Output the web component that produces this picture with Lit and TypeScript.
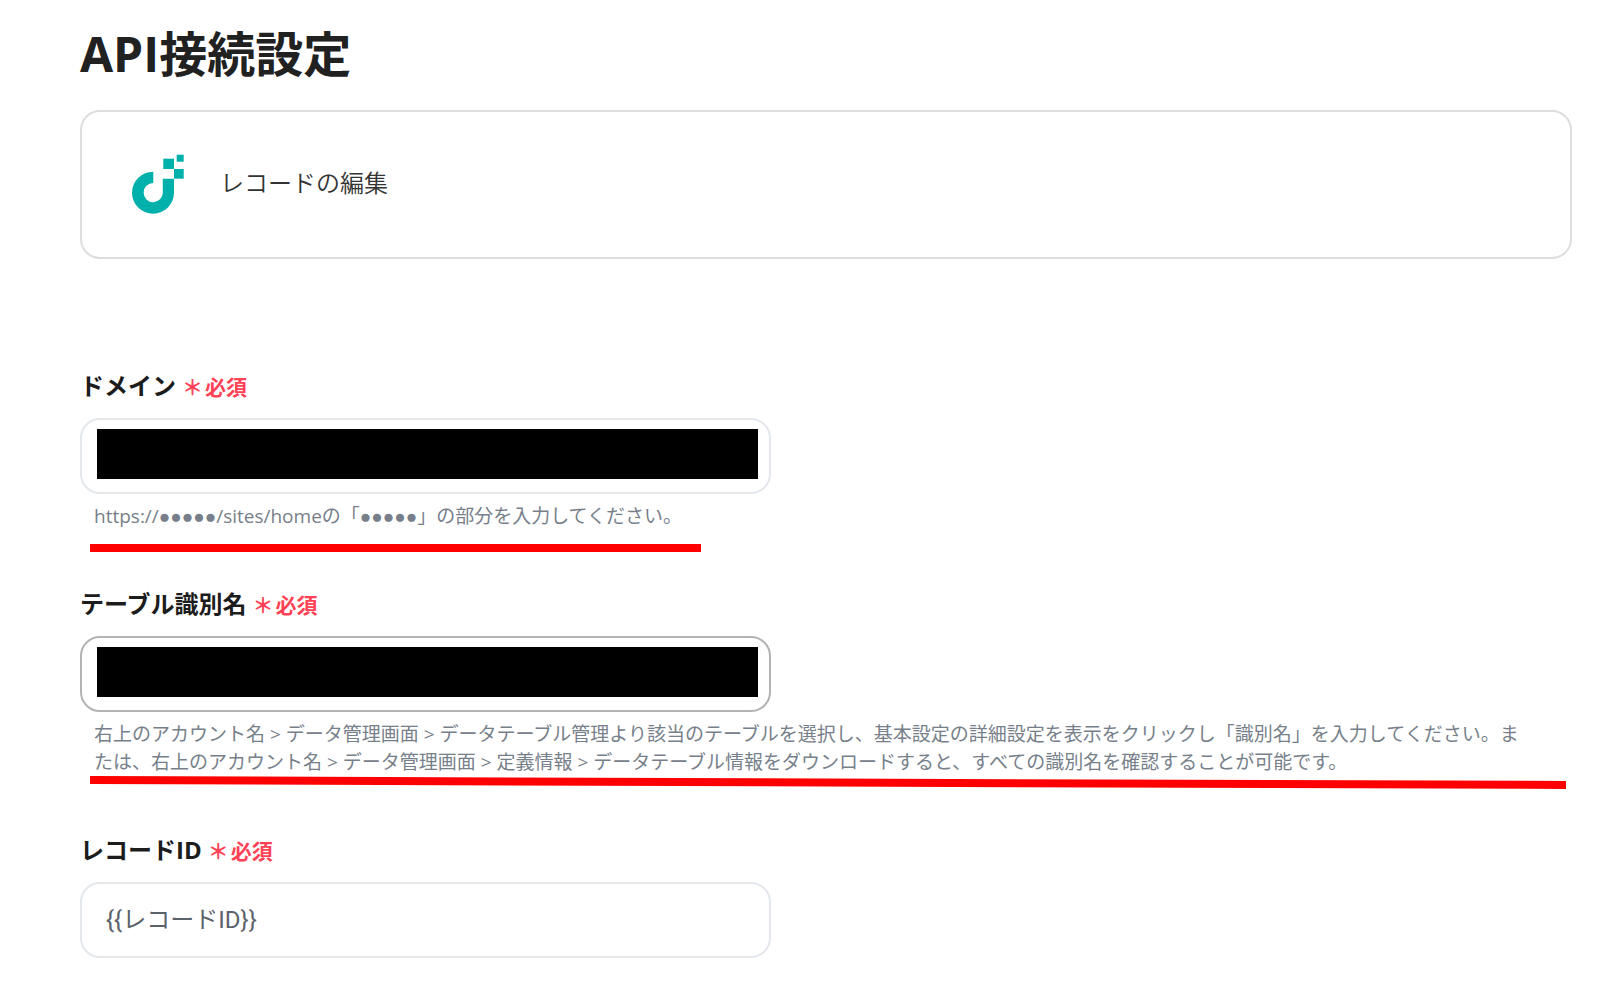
import { LitElement, html, css, svg, nothing } from "lit";
import { customElement, property } from "lit/decorators.js";

/** Hand-drawn red marker line; `drop` is how far it sinks from left to right. */
@customElement("marker-line")
class MarkerLine extends LitElement {
  @property({ type: Number }) drop = 0;

  static styles = css`
    :host {
      display: block;
    }
    .line {
      display: block;
      width: 100%;
      fill: #ff0000;
    }
  `;

  render() {
    const h = 8 + this.drop;
    return html`<svg class="line" height=${h} viewBox="0 0 100 ${h}" preserveAspectRatio="none" aria-hidden="true">
      ${svg`<polygon points="0,0 100,${this.drop} 100,${h} 0,8"></polygon>`}
    </svg>`;
  }
}

@customElement("form-field")
class FormField extends LitElement {
  @property() label = "";
  @property() value = "";
  @property() hint = "";
  @property({ type: Boolean }) masked = false;
  @property({ type: Boolean }) active = false;
  @property({ type: Boolean }) long = false;

  static styles = css`
    :host {
      display: block;
    }
    .label {
      display: flex;
      align-items: baseline;
      gap: 6px;
      height: 36px;
      line-height: 36px;
      font-size: 24px;
      font-weight: 700;
      color: #1c1c1c;
    }
    .required {
      display: flex;
      gap: 2px;
      font-size: 21px;
      color: #ff4256;
    }
    .box {
      position: relative;
      max-width: 691px;
      margin-top: 14px;
    }
    .input {
      display: block;
      box-sizing: border-box;
      width: 100%;
      height: 76px;
      padding: 0 24px 6px;
      border: 2px solid #e4e8ec;
      border-radius: 20px;
      background: #fff;
      color: #5b626b;
      font-family: Roboto, "Noto Sans CJK JP", sans-serif;
      font-size: 24px;
      outline: none;
    }
    .input.active {
      border-color: #b3b3b3;
    }
    .mask {
      position: absolute;
      inset: 11px 13px 15px 17px;
      background: #000;
    }
    .note {
      position: relative;
      margin-top: 8px;
    }
    .hint {
      margin: 0;
      padding: 0 40px 0 14px;
      font-size: 19px;
      line-height: 28px;
      color: #77808a;
      line-break: anywhere;
    }
    .marker {
      position: absolute;
      left: 10px;
      top: 42px;
      width: 611px;
    }
    .marker.long {
      top: 56px;
      right: 6px;
      width: auto;
    }
  `;

  render() {
    return html`
      <label class="label" for="control">
        <span>${this.label}</span>
        <span class="required"><span>＊</span><span>必須</span></span>
      </label>
      <div class="box">
        <input id="control" class="input ${this.active ? "active" : ""}" type="text" .value=${this.value} required />
        ${this.masked ? html`<div class="mask"></div>` : nothing}
      </div>
      ${this.hint
        ? html`<div class="note">
            <p class="hint">${this.hint}</p>
            <marker-line class="marker ${this.long ? "long" : ""}" .drop=${this.long ? 5 : 0}></marker-line>
          </div>`
        : nothing}
    `;
  }
}

@customElement("app-root")
class AppRoot extends LitElement {
  static styles = css`
    :host {
      display: block;
      background: #fff;
      font-family: "Open Sans", "Liberation Sans", "Noto Sans CJK JP", sans-serif;
    }
    .page {
      padding: 18px 28px 36px 80px;
    }
    .title {
      margin: 0;
      height: 72px;
      line-height: 72px;
      font-size: 48px;
      font-weight: 700;
      color: #212121;
    }
    .card {
      display: flex;
      align-items: center;
      gap: 36px;
      box-sizing: border-box;
      height: 149px;
      margin-top: 20px;
      padding: 0 50px 2px;
      border: 2px solid #dedede;
      border-radius: 20px;
      font-size: 24px;
      font-weight: 350;
      color: #333;
    }
    .name {
      padding-bottom: 4px;
    }
    .logo {
      flex: none;
      fill: #00b0aa;
    }
    .form {
      display: flex;
      flex-direction: column;
      gap: 56px;
      margin-top: 109px;
    }
  `;

  render() {
    return html`
      <main class="page">
        <h1 class="title">API接続設定</h1>
        <section class="card">
          <svg class="logo" width="52" height="60" viewBox="0 0 52 60" aria-hidden="true">
            <path d="M21.3 17.7A21 21 0 1 0 42 38.5V24.7H30.8V38.5A9.6 9.6 0 1 1 21.3 29Z" />
            <rect x="31.3" y="4.7" width="10.7" height="10.3" />
            <rect x="42" y="15" width="9.7" height="9.7" />
            <rect x="44.7" y="0.7" width="7" height="7" />
          </svg>
          <span class="name">レコードの編集</span>
        </section>
        <form class="form">
          <form-field
            label="ドメイン"
            masked
            hint="https://●●●●●/sites/homeの「●●●●●」の部分を入力してください。"
          ></form-field>
          <form-field
            label="テーブル識別名"
            masked
            active
            long
            hint="右上のアカウント名 > データ管理画面 > データテーブル管理より該当のテーブルを選択し、基本設定の詳細設定を表示をクリックし「識別名」を入力してください。または、右上のアカウント名 > データ管理画面 > 定義情報 > データテーブル情報をダウンロードすると、すべての識別名を確認することが可能です。"
          ></form-field>
          <form-field label="レコードID" value="{{レコードID}}"></form-field>
        </form>
      </main>
    `;
  }
}
